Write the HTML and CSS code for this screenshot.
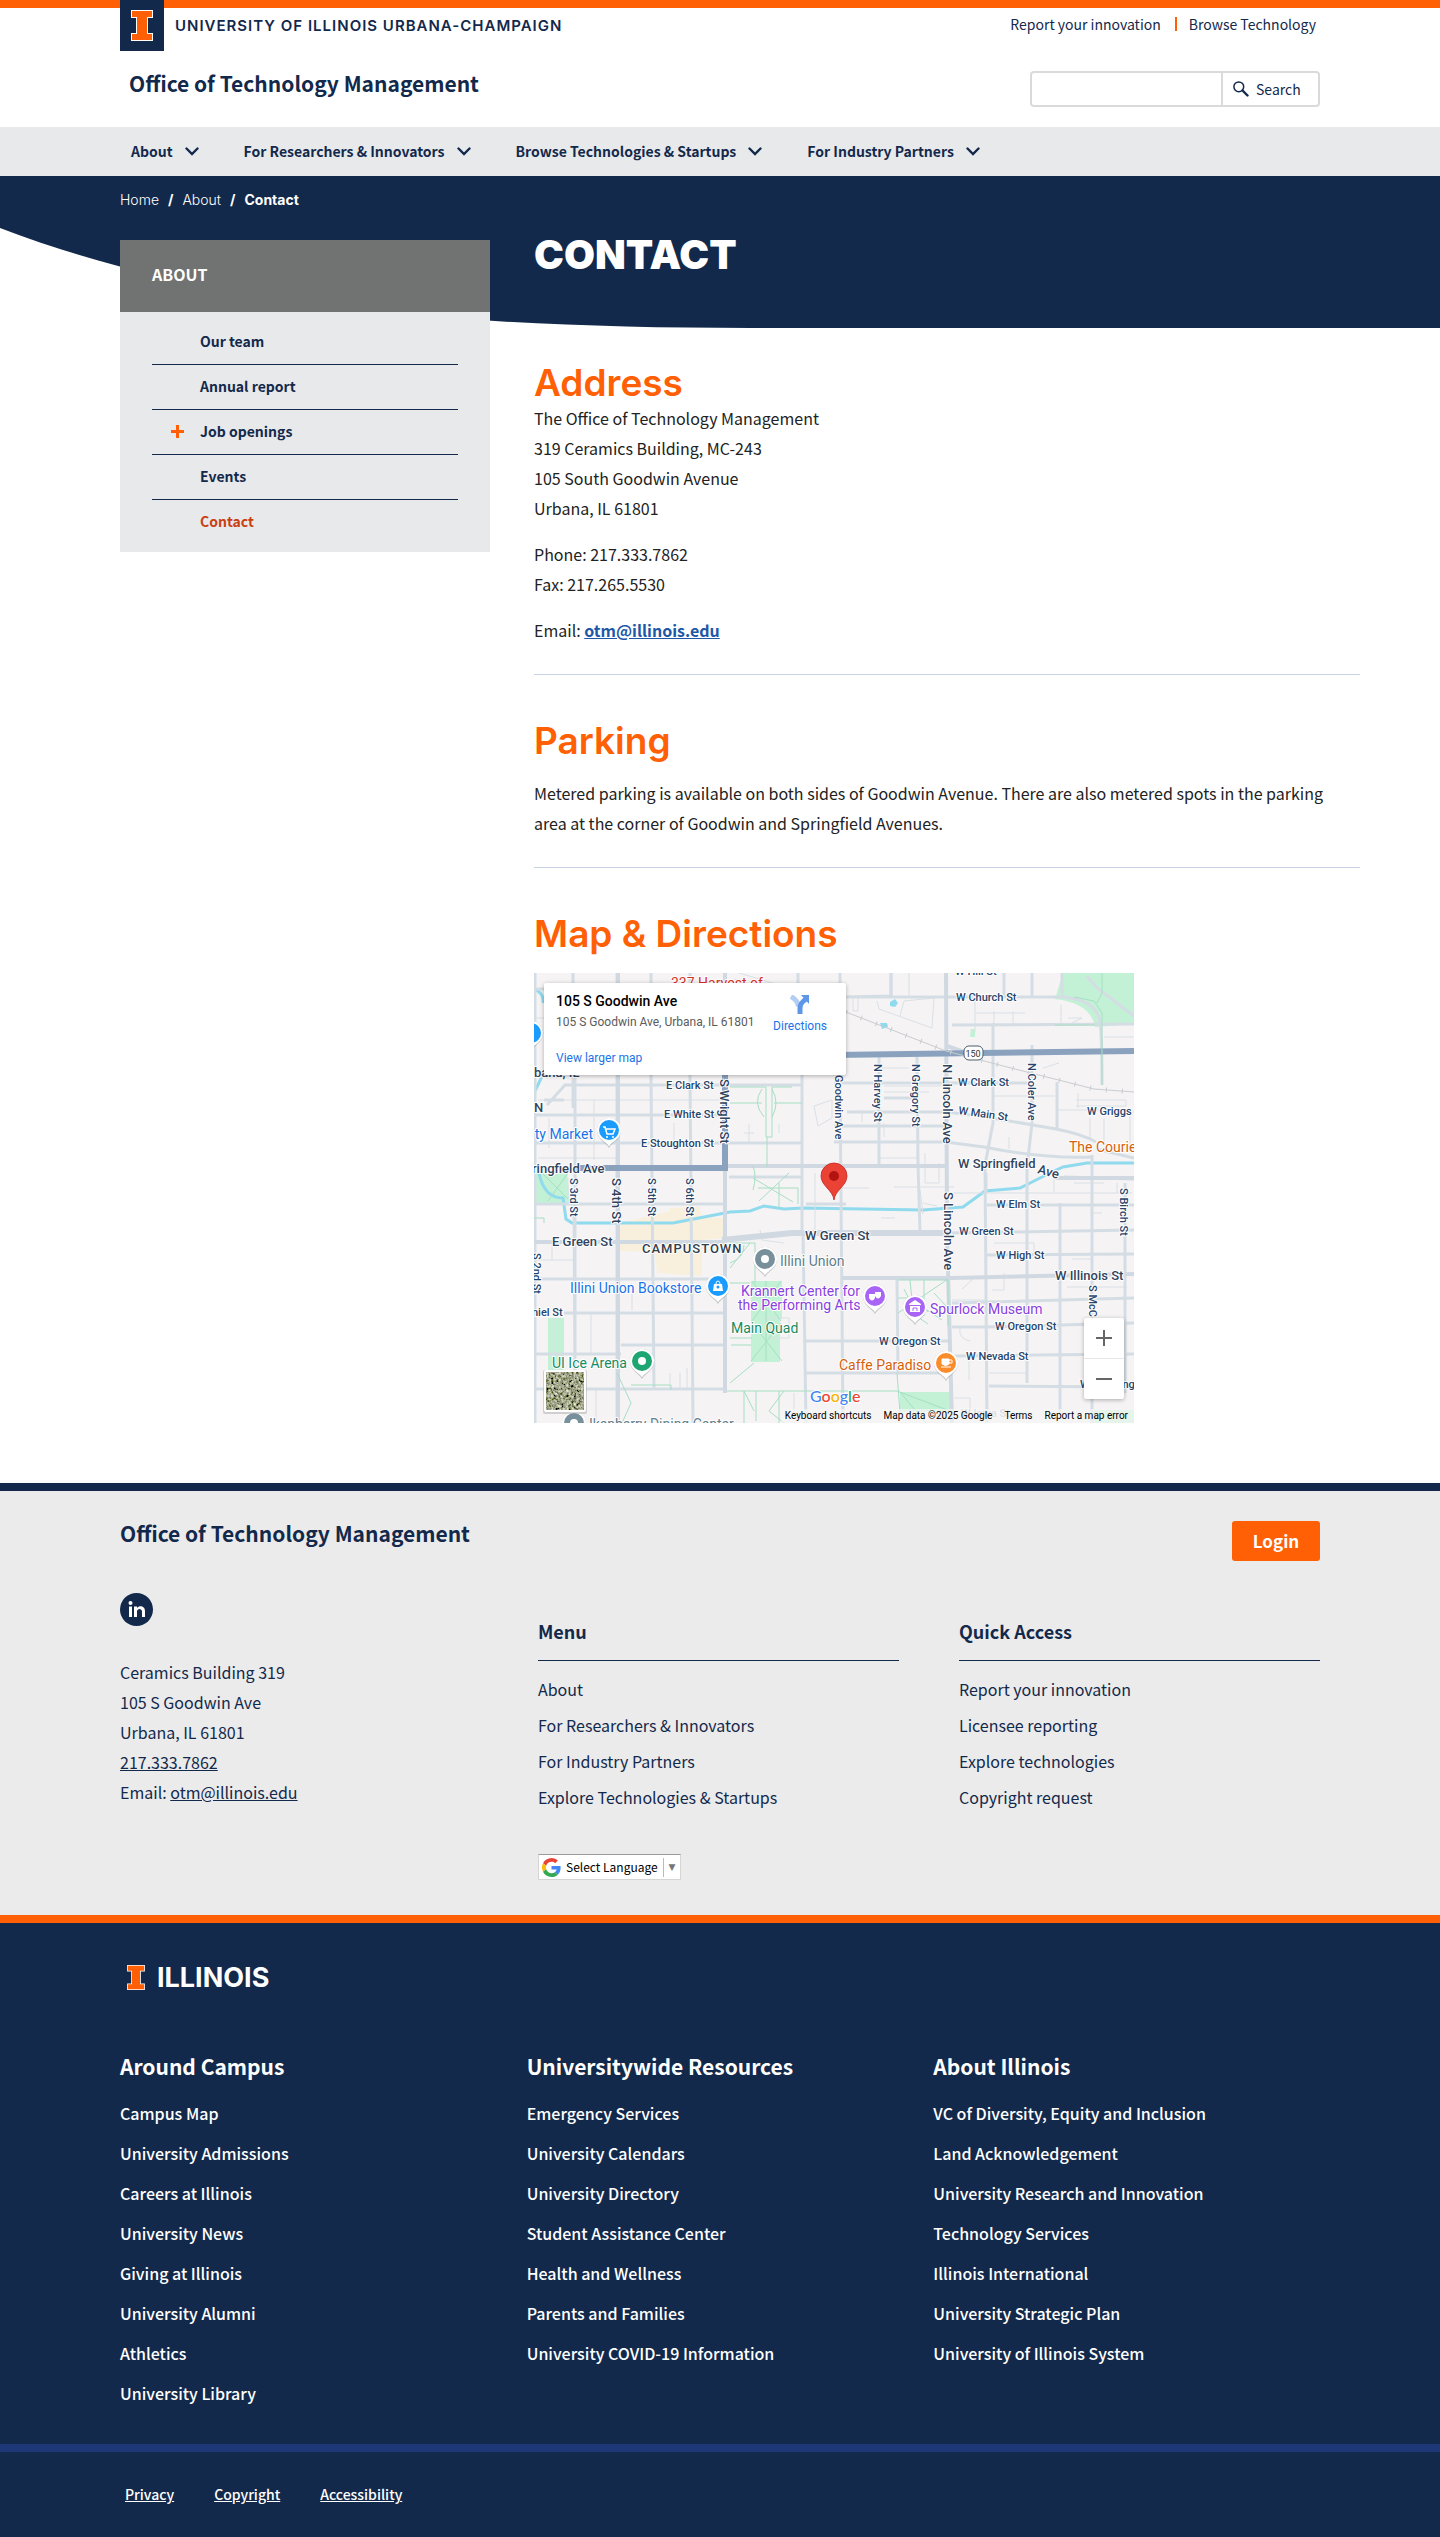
FILE: index.html
```html
<!DOCTYPE html>
<html lang="en">
<head>
<meta charset="utf-8">
<meta name="viewport" content="width=device-width, initial-scale=1">
<title>Contact | Office of Technology Management</title>
<link rel="stylesheet" href="styles.css">
</head>
<body>
<svg class="defs" width="0" height="0" aria-hidden="true">
  <symbol id="block-i" viewBox="0 0 22 31">
    <path d="M0 0h22v8h-5v15h5v8H0v-8h5V8H0z" fill="#fff"/>
    <path d="M1 1h20v6h-5v17h5v6H1v-6h5V7H1z" fill="#ff5f05"/>
  </symbol>
  <symbol id="chevron" viewBox="0 0 14 9">
    <path d="M1.500 1.500 7 7l5.500-5.500" fill="none" stroke="#13294b" stroke-width="2.400" stroke-linecap="round"/>
  </symbol>
</svg>

<header class="masthead">
  <div class="masthead-left">
    <a class="campus" href="#">
      <span class="campus-mark"><svg width="22" height="31"><use href="#block-i"/></svg></span>
      <span class="campus-name">UNIVERSITY OF ILLINOIS URBANA-CHAMPAIGN</span>
    </a>
    <a class="unit-name" href="#">Office of Technology Management</a>
  </div>
  <div class="masthead-right">
    <ul class="quick-links">
      <li><a href="#">Report your innovation</a></li>
      <li><a href="#">Browse Technology</a></li>
    </ul>
    <form class="search">
      <input type="search" aria-label="Search this site">
      <button type="submit">
        <svg width="16" height="16" viewBox="0 0 16 16" fill="none" stroke="#13294b"><circle cx="5.800" cy="5.800" r="4.900" stroke-width="1.500"/><path d="m9.500 9.500 5 5" stroke-width="2.400" stroke-linecap="round"/></svg>
        Search
      </button>
    </form>
  </div>
</header>

<nav class="main-nav" aria-label="Main">
  <a href="#">About <svg width="14" height="9"><use href="#chevron"/></svg></a>
  <a href="#">For Researchers &amp; Innovators <svg width="14" height="9"><use href="#chevron"/></svg></a>
  <a href="#">Browse Technologies &amp; Startups <svg width="14" height="9"><use href="#chevron"/></svg></a>
  <a href="#">For Industry Partners <svg width="14" height="9"><use href="#chevron"/></svg></a>
</nav>

<div class="page">
  <svg class="hero" viewBox="0 0 1440 152" preserveAspectRatio="none" aria-hidden="true"><path d="M0 0h1440v152H750C450 152 200 129 0 52z" fill="#13294b"/></svg>
  <ol class="breadcrumb">
    <li><a href="#">Home</a></li>
    <li><a href="#">About</a></li>
    <li aria-current="page">Contact</li>
  </ol>
  <div class="columns">
    <aside class="side-nav">
      <h2>ABOUT</h2>
      <ul>
        <li><a href="#">Our team</a></li>
        <li><a href="#">Annual report</a></li>
        <li class="has-children"><a href="#">Job openings</a></li>
        <li><a href="#">Events</a></li>
        <li><a class="current" href="#">Contact</a></li>
      </ul>
    </aside>
    <main>
      <h1>CONTACT</h1>
      <h2 class="tight">Address</h2>
      <p>The Office of Technology Management<br>319 Ceramics Building, MC-243<br>105 South Goodwin Avenue<br>Urbana, IL 61801</p>
      <p>Phone: 217.333.7862<br>Fax: 217.265.5530</p>
      <p>Email: <a href="#">otm@illinois.edu</a></p>
      <hr>
      <h2>Parking</h2>
      <p>Metered parking is available on both sides of Goodwin Avenue. There are also metered spots in the parking area at the corner of Goodwin and Springfield Avenues.</p>
      <hr>
      <h2>Map &amp; Directions</h2>
      <div class="map">
        <svg class="map-canvas" viewBox="0 0 600 450" role="img" aria-label="Map of 105 S Goodwin Ave">
          <defs>
            <symbol id="pin" viewBox="-14 -14 28 34">
              <path d="M0 17C-2 12-12 9-12-1a12 12 0 0 1 24 0C12 9 2 12 0 17z" fill="#8a8f94" opacity=".5"/>
              <path d="M0 15.500C-2 11-12 8-12-1a12 12 0 0 1 24 0C12 8 2 11 0 15.500z" fill="#fff"/>
              <circle cy="-1" r="10" fill="currentColor"/>
            </symbol>
            <filter id="aerial" x="0" y="0" width="100%" height="100%">
              <feTurbulence type="fractalNoise" baseFrequency=".4" numOctaves="3" seed="4"/>
              <feColorMatrix values="1.300 .5 0 0 -.55  1.300 .5 0 0 -.53  1.200 .3 0 0 -.5  0 0 0 0 1"/>
            </filter>
          </defs>
          <rect width="600" height="450" fill="#f5f3f4"/>
          <g fill="#c3f1d5">
            <path d="M529 0h71v51l-39 3q-4-24-40-28z"/>
            <path d="M0 199h33l3 32H0z"/>
            <path d="M14 345h16v52H14z"/>
            <path d="M217 308h31v38h-2v43h-29z"/>
            <path d="M366 419h50v20h-50z"/>
            <path d="M556 437h44v13h-44z"/>
            <path d="M437 56h4v8h-5z"/>
          </g>
          <path d="M86 250l50-12 0-3 30-1 1 10 24 1v20l-23 2v36l-45-3-2-21-35-1z" fill="#f8f0dc"/>
          <path d="M356 29l5-3 3 4-3 4-5-1zM346 50h7l1 4-6 2z" fill="#90daee"/>
          <g class="creek">
            <path d="M5 200Q10 225 29 225l3 21 6 4h101l57-11 20-1 14-5 20 3 19-1 120 2 40-3 22-16 35-3 26-13 17-8 24-4h47"/>
            <path d="M0 16q10 4 9 14M12 95L0 120"/>
          </g>
          <g class="lane">
            <path d="M0 45h10M0 60h10M12 60v40M4 127h186M4 185h80M60 127v60M140 150v20M15 145v30M0 287h40M18 270v17M57 340v42M20 345v95M34 205v20M98 320v17M136 400v16M146 400v16M153 395v20M62 417v33"/>
            <path d="M195 45h73M205 0l40 12M200 6l30 10M215 151v18M210 160h10M245 151v9M280 133l18-6v18l-14 8z"/>
            <path d="M319 25v13h5v-13M343 28l2 8 53 19 2-30-30 3-4 15M375 0v22M441 23v36M441 40h50M460 38v15M479 38v15M570 64h30M527 32v20M538 50l10-5-14 0M525 90l-16 5M459 123h62M542 127h50v6h-50M522 137h48l30 2M544 120v15M570 145v28M596 143v30M556 145v20M475 164v12M350 113h60M350 119h45M345 95h30M328 137v12M345 185h38M350 150v14M391 180v30h14v-20M360 214h60M418 220h180M460 270h40M500 270v16M470 300v17h-12M428 316l12-11M418 327h35M426 354q-2 12 10 14M435 385v22M420 425h16v20M455 400h38M520 205v14M540 210h30M583 210v10M533 314h60M538 286h20M556 240h12M300 215h35M386 217l3 24M347 245h14M389 230l14 3M281 200v60M250 270l-22-3-2-10M230 345h25v20h-20M260 420v25"/>
          </g>
          <g class="street">
            <path d="M1 0v450M39 0v135M41 100v300M40 217l1 199M83 0v450M117 0v100M117 102l3 314M156 102l3 348M84 0v12M156 0v15M264 0v20M268 100v160M269 260l3 190M306 0v110M306 110l3 340M345 84v108M383 84l1 108 2 66M363 306l1 94M459 50v100l-8 42 2 258M498 72v78l-5 44v216M523 109v46M526 230v210M558 182v268M591 210v210M528 0v25M498 0v23M470 0v23M357 0v23"/>
            <path d="M0 16h268M13 132l18-20h160M0 142h190M0 170h268M10 127h20M191 170h77M191 112h77M0 231h190M0 306h190M30 340h163M87 372h106M0 381h87M0 416h193M272 368h143M272 400h143M306 24l51-1v-23M313 24h215q30 2 37 20 3 8 3 68M600 51l-182 1M300 110h200M350 125h30M313 139h100l39 5 70 12q26 5 40 13M452 220v-20M300 169h112l38 5q60 12 108 10M562 176l38 9M453 232h147M412 260l188-3M453 282l147-1M418 330l182-5M418 354h35l147-4M418 383l182-2M455 413l145 1M300 153h113M530 204l70 2M195 204h73M272 231h40M191 193h222M0 100h30M553 3l10 12 37 28"/>
          </g>
          <g class="avenue">
            <path d="M412 0l1 259 5 191M84 0v450M191 0v420M0 269h190M308 305h110l182-4M191 193h222M522 205h78M413 73l20 7"/>
            <path class="wide" d="M188 267l70-7h155"/>
          </g>
          <path class="highway" d="M40 195h151v-93M300 82l300-4"/>
          <path class="rail" d="M312 39l100 39 65 17 83 21 40 3"/>
          <path class="rail-ties" d="M312 39l100 39 65 17 83 21 40 3"/>
          <g class="path">
            <path d="M196 114h32l4 0 0 50 6 0 0-50h20M228 116q-10 14 2 28M238 116q8 14 0 28M196 130h32M240 130h28M233 164v30M219 193q4 10 0 24M219 205l40 24M225 228l30-28M224 215h40v16M245 210v25M196 290q14-5 14-18M196 270h25v40M196 295l20-25M196 310h20M196 365h22M196 410l24-20M218 308l29 40M247 308l-29 40M218 350l30 38M247 350l-30 38M232 308v80M217 372h-20M193 418h170l53 20M366 419l50 60M363 400l3 40M83 400l14 30-9 20M97 412h40v5M210 450v-32l10 20M222 418v30M250 418l-15 20 15 12M245 450v-32M8 200l26 26M34 200l-20 28M10 250v-5H0"/>
            <path d="M364 307h50v46M364 340l50-34M376 307l2 20 30 20M390 307v36M364 325h20l10 14M370 316l14 28 10 7M400 320l14 15"/>
            <path d="M568 112V40l-8-12-20-4M568 0v20l-5 10M521 52h40"/>
          </g>

          <g class="poi-labels">
            <text class="blue" x="59" y="166" text-anchor="end">ty Market</text>
            <text class="blue" x="36" y="320">Illini Union Bookstore</text>
            <text class="slate" x="246" y="293">Illini Union</text>
            <text class="violet" x="207" y="323">Krannert Center for</text>
            <text class="violet" x="204" y="337">the Performing Arts</text>
            <text class="violet" x="396" y="341">Spurlock Museum</text>
            <text class="green" x="197" y="360">Main Quad</text>
            <text class="green" x="18" y="395">UI Ice Arena</text>
            <text class="orange" x="305" y="397">Caffe Paradiso</text>
            <text class="orange" x="535" y="179">The Courier Cafe</text>
            <text class="slate" x="55" y="456">Ikenberry Dining Center</text>
            <text class="red" x="137" y="15">337 Harvest of</text>
          </g>
          <g class="street-labels">
            <text x="132" y="116">E Clark St</text>
            <text x="130" y="145">E White St</text>
            <text x="107" y="174">E Stoughton St</text>
            <text x="421" y="2">W Hill St</text>
            <text x="422" y="28">W Church St</text>
            <text x="424" y="113">W Clark St</text>
            <text transform="translate(424 141) rotate(8)">W Main St</text>
            <text x="553" y="142">W Griggs</text>
            <text x="462" y="235">W Elm St</text>
            <text x="425" y="262">W Green St</text>
            <text x="462" y="286">W High St</text>
            <text x="461" y="357">W Oregon St</text>
            <text x="345" y="372">W Oregon St</text>
            <text x="432" y="387">W Nevada St</text>
            <text x="427" y="444" opacity=".45">W Iowa St</text>
            <text x="546" y="415">W Washington</text>
            <text x="-2" y="343">niel St</text>
            <text transform="translate(301 102) rotate(90)">Goodwin Ave</text>
            <text transform="translate(340 91) rotate(90)">N Harvey St</text>
            <text transform="translate(378 91) rotate(90)">N Gregory St</text>
            <text transform="translate(494 90) rotate(90)">N Coler Ave</text>
            <text transform="translate(36 205) rotate(90)">S 3rd St</text>
            <text transform="translate(114 205) rotate(90)">S 5th St</text>
            <text transform="translate(152 205) rotate(90)">S 6th St</text>
            <text transform="translate(-1 280) rotate(90)">S 2nd St</text>
            <text transform="translate(586 215) rotate(90)">S Birch St</text>
            <text transform="translate(555 312) rotate(90)">S McC</text>
          </g>
          <g class="road-labels">
            <text x="-2" y="200">ringfield Ave</text>
            <text x="0" y="104">bana, IL</text>
            <text x="0" y="139">N</text>
            <text x="18" y="273">E Green St</text>
            <text x="271" y="267">W Green St</text>
            <text x="424" y="195">W Springfield</text>
            <text transform="translate(503 200) rotate(16)">Ave</text>
            <text x="521" y="307">W Illinois St</text>
            <text transform="translate(186 106) rotate(90)">S Wright St</text>
            <text transform="translate(409 91) rotate(90)">N Lincoln Ave</text>
            <text transform="translate(410 219) rotate(90)">S Lincoln Ave</text>
            <text transform="translate(78 205) rotate(90)">S 4th St</text>
            <text class="district" x="108" y="280">CAMPUSTOWN</text>
          </g>
          <rect x="430" y="73" width="19" height="14" rx="5" fill="#fff" stroke="#4d5f6c"/>
          <text class="shield" x="439" y="84">150</text>

          <use href="#pin" x="61" y="144" width="28" height="34" color="#1a9cff"/>
          <path d="M69 154h2l2 7h6l2-5h-9" fill="none" stroke="#fff" stroke-width="1.500"/><circle cx="73" cy="164" r="1" fill="#fff"/><circle cx="79" cy="164" r="1" fill="#fff"/>
          <use href="#pin" x="-17" y="47" width="28" height="34" color="#1a9cff"/>
          <use href="#pin" x="170" y="300" width="28" height="34" color="#1a9cff"/>
          <path d="M180 311h8l1 7h-10z" fill="#fff"/><path d="M182 311a2 3 0 0 1 4 0" fill="none" stroke="#fff"/><circle cx="184" cy="314" r="1.500" fill="#1a9cff"/>
          <use href="#pin" x="217" y="273" width="28" height="34" color="#78909c"/><circle cx="231" cy="286" r="4" fill="#fff"/>
          <use href="#pin" x="94" y="375" width="28" height="34" color="#1ea672"/><circle cx="108" cy="388" r="4" fill="#fff"/>
          <use href="#pin" x="26" y="437" width="28" height="34" color="#78909c"/><circle cx="40" cy="450" r="4" fill="#fff"/>
          <use href="#pin" x="327" y="310" width="28" height="34" color="#a864f5"/>
          <path d="M335 321h6v4q-3 5-6 0zM341 319h6v4q-3 5-6 0z" fill="#fff"/>
          <use href="#pin" x="367" y="321" width="28" height="34" color="#a864f5"/>
          <path d="M375 331l6-4 6 4v1h-12zM376 333h10v6h-10z" fill="#fff"/><path d="M379 338v-3h4v3" fill="none" stroke="#a864f5"/>
          <use href="#pin" x="398" y="377" width="28" height="34" color="#fb8c2b"/>
          <path d="M408 386h7v5q-3 3-7 0zM407 394h10" fill="#fff" stroke="#fff"/><path d="M415 387h3v3h-3" fill="none" stroke="#fff"/>
          <path d="M300 227c-1-10-13-14-13-24a13 13 0 0 1 26 0c0 10-12 14-13 24z" fill="#ea4335" stroke="#c5221f" stroke-width=".8"/><circle cx="300" cy="203" r="5" fill="#b31412"/>

          <text class="google" x="276" y="429"><tspan fill="#4285f4">G</tspan><tspan fill="#ea4335">o</tspan><tspan fill="#f5b400">o</tspan><tspan fill="#4285f4">g</tspan><tspan fill="#34a853">l</tspan><tspan fill="#ea4335">e</tspan></text>
          <rect x="9" y="397" width="44" height="44" rx="2" fill="#999" opacity=".4"/>
          <rect x="10" y="397" width="42" height="42" rx="2" fill="#fff"/>
          <rect x="12" y="399" width="38" height="38" fill="#6f7560" filter="url(#aerial)"/>
        </svg>
        <div class="map-card">
          <div>
            <strong>105 S Goodwin Ave</strong>
            <span>105 S Goodwin Ave, Urbana, IL 61801</span>
            <a href="#">View larger map</a>
          </div>
          <a class="directions" href="#">
            <svg width="20" height="20" viewBox="0 0 20 20"><path d="M1 1.500q7 4 7.500 10" fill="none" stroke="#b3cdf3" stroke-width="5"/><path d="M10 19v-6q0-5 6-9" fill="none" stroke="#5e97e8" stroke-width="5"/><path d="M11 0h8v9z" fill="#5e97e8"/></svg>
            Directions
          </a>
        </div>
        <div class="map-zoom">
          <button type="button" aria-label="Zoom in"><svg width="16" height="16" viewBox="0 0 16 16"><path d="M8 0v16M0 8h16" stroke="#666" stroke-width="2"/></svg></button>
          <button type="button" aria-label="Zoom out"><svg width="16" height="16" viewBox="0 0 16 16"><path d="M0 8h16" stroke="#666" stroke-width="2"/></svg></button>
        </div>
        <div class="map-credits">
          <button type="button">Keyboard shortcuts</button>
          <span>Map data ©2025 Google</span>
          <a href="#">Terms</a>
          <a href="#">Report a map error</a>
        </div>
      </div>
    </main>
  </div>
</div>

<footer>
  <section class="unit-footer">
    <div class="unit-footer-top">
      <a class="unit-name" href="#">Office of Technology Management</a>
      <a class="login" href="#">Login</a>
    </div>
    <div class="unit-footer-grid">
      <div>
        <a class="linkedin" href="#" aria-label="LinkedIn">
          <svg width="33" height="33" viewBox="0 0 33 33"><circle cx="16.500" cy="16.500" r="16.500" fill="#13294b"/><g fill="#fff"><circle cx="10.500" cy="10" r="2"/><path d="M9 13.500h3V24H9zM14 13.500h3V15c2-3 8-2.500 8 3v6h-3v-5.500c0-3.500-5-3.500-5 0V24h-3z"/></g></svg>
        </a>
        <address>Ceramics Building 319<br>105 S Goodwin Ave<br>Urbana, IL 61801<br><a href="#">217.333.7862</a><br>Email: <a href="#">otm@illinois.edu</a></address>
      </div>
      <nav class="link-group" aria-label="Menu">
        <h3>Menu</h3>
        <ul>
          <li><a href="#">About</a></li>
          <li><a href="#">For Researchers &amp; Innovators</a></li>
          <li><a href="#">For Industry Partners</a></li>
          <li><a href="#">Explore Technologies &amp; Startups</a></li>
        </ul>
        <div class="language">
          <svg width="19" height="19" viewBox="0 0 48 48" aria-hidden="true"><path fill="#ea4335" d="M24 9.500c3.540 0 6.710 1.220 9.210 3.600l6.850-6.850C35.900 2.380 30.470 0 24 0 14.620 0 6.510 5.380 2.560 13.220l7.980 6.190C12.430 13.720 17.740 9.500 24 9.500z"/><path fill="#4285f4" d="M46.980 24.550c0-1.570-.15-3.090-.38-4.550H24v9.020h12.940c-.58 2.960-2.260 5.480-4.780 7.180l7.730 6c4.510-4.180 7.090-10.360 7.090-17.650z"/><path fill="#fbbc05" d="M10.530 28.590a14.500 14.500 0 0 1 0-9.180l-7.980-6.190a24 24 0 0 0 0 21.560z"/><path fill="#34a853" d="M24 48c6.480 0 11.930-2.130 15.890-5.810l-7.730-6c-2.150 1.450-4.920 2.300-8.160 2.300-6.260 0-11.570-4.220-13.470-9.910l-7.980 6.190C6.510 42.620 14.620 48 24 48z"/></svg>
          <select aria-label="Language"><option>Select Language</option></select>
          <span class="language-arrow" aria-hidden="true">▼</span>
        </div>
      </nav>
      <nav class="link-group" aria-label="Quick Access">
        <h3>Quick Access</h3>
        <ul>
          <li><a href="#">Report your innovation</a></li>
          <li><a href="#">Licensee reporting</a></li>
          <li><a href="#">Explore technologies</a></li>
          <li><a href="#">Copyright request</a></li>
        </ul>
      </nav>
    </div>
  </section>
  <section class="campus-footer">
    <a class="wordmark" href="#"><svg width="18" height="25"><use href="#block-i"/></svg><span>ILLINOIS</span></a>
    <div class="campus-grid">
      <nav aria-label="Around Campus">
        <h3>Around Campus</h3>
        <ul>
          <li><a href="#">Campus Map</a></li>
          <li><a href="#">University Admissions</a></li>
          <li><a href="#">Careers at Illinois</a></li>
          <li><a href="#">University News</a></li>
          <li><a href="#">Giving at Illinois</a></li>
          <li><a href="#">University Alumni</a></li>
          <li><a href="#">Athletics</a></li>
          <li><a href="#">University Library</a></li>
        </ul>
      </nav>
      <nav aria-label="Universitywide Resources">
        <h3>Universitywide Resources</h3>
        <ul>
          <li><a href="#">Emergency Services</a></li>
          <li><a href="#">University Calendars</a></li>
          <li><a href="#">University Directory</a></li>
          <li><a href="#">Student Assistance Center</a></li>
          <li><a href="#">Health and Wellness</a></li>
          <li><a href="#">Parents and Families</a></li>
          <li><a href="#">University COVID-19 Information</a></li>
        </ul>
      </nav>
      <nav aria-label="About Illinois">
        <h3>About Illinois</h3>
        <ul>
          <li><a href="#">VC of Diversity, Equity and Inclusion</a></li>
          <li><a href="#">Land Acknowledgement</a></li>
          <li><a href="#">University Research and Innovation</a></li>
          <li><a href="#">Technology Services</a></li>
          <li><a href="#">Illinois International</a></li>
          <li><a href="#">University Strategic Plan</a></li>
          <li><a href="#">University of Illinois System</a></li>
        </ul>
      </nav>
    </div>
  </section>
  <section class="legal">
    <a href="#">Privacy</a>
    <a href="#">Copyright</a>
    <a href="#">Accessibility</a>
  </section>
</footer>
</body>
</html>
```
FILE: styles.css
```css
:root {
  --navy: #13294b;
  --orange: #ff5f05;
  --gutter: 120px;
  --body-font: "Noto Sans CJK SC", "Noto Sans", sans-serif;
  --head-font: Inter, "Open Sans", sans-serif;
}

* { box-sizing: border-box; }

body {
  margin: 0;
  background: #fff;
  color: #222;
  font-family: var(--body-font);
  font-size: 16px;
  line-height: 30px;
}

h1, h2, h3, p, ul, ol { margin: 0; padding: 0; }
ul, ol { list-style: none; }
a { color: inherit; text-decoration: none; }
svg { display: block; flex: none; }
.defs { position: absolute; }
button, input, select { font: inherit; color: inherit; margin: 0; padding: 0; border: 0; background: none; }

/* Header */
.masthead {
  display: flex;
  justify-content: space-between;
  padding: 0 var(--gutter) 20px;
  background: linear-gradient(var(--orange) 8px, #fff 8px);
  color: var(--navy);
}
.campus { display: flex; align-items: center; gap: 11px; }
.campus-mark {
  display: grid;
  place-items: center;
  width: 44px;
  height: 51px;
  background: var(--navy);
}
.campus-name {
  font-family: var(--head-font);
  font-size: 15px;
  font-weight: 600;
  letter-spacing: 1px;
}
.unit-name {
  display: block;
  color: var(--navy);
  font-size: 21px;
  font-weight: 700;
}
.masthead .unit-name { margin: 14px 0 0 9px; line-height: 36px; }
.masthead-right { display: flex; flex-direction: column; align-items: flex-end; gap: 35px; padding-top: 12px; }
.quick-links { display: flex; align-items: center; font-size: 14px; line-height: 24px; padding-right: 4px; }
.quick-links li { display: flex; align-items: center; }
.quick-links li + li::before { content: ""; width: 2px; height: 14px; margin: 0 12px 0 14px; background: var(--orange); }
.search {
  display: flex;
  width: 290px;
  height: 36px;
  border: 2px solid #d9dadb;
  border-radius: 4px;
}
.search input { flex: 1; min-width: 0; padding: 0 10px; outline: 0; }
.search button {
  display: flex;
  align-items: center;
  gap: 7px;
  width: 97px;
  padding-left: 10px;
  border-left: 2px solid #d9dadb;
  font-size: 14px;
  line-height: 20px;
}

.main-nav {
  display: flex;
  gap: 45px;
  height: 49px;
  padding: 0 131px;
  background: #e8e9eb;
  color: var(--navy);
  font-size: 14px;
  font-weight: 700;
  line-height: 49px;
}
.main-nav a { display: flex; align-items: center; gap: 12px; }

/* Page */
.page { position: relative; padding: 0 80px 60px var(--gutter); }
.hero { position: absolute; inset: 0 0 auto 0; width: 100%; height: 152px; z-index: -1; }
.breadcrumb {
  display: flex;
  height: 64px;
  padding-top: 14px;
  color: #fff;
  font: 300 14px/20px var(--head-font);
}
.breadcrumb li + li::before { content: "/"; margin: 0 9px; font-weight: 700; }
.breadcrumb [aria-current] { font-weight: 700; }
.columns { display: grid; grid-template-columns: 370px minmax(0, 1fr); gap: 44px; align-items: start; }

.side-nav { background: #e8e9eb; color: var(--navy); }
.side-nav h2 {
  padding: 0 32px 4px;
  background: #707372;
  color: #fff;
  font-size: 16px;
  font-weight: 700;
  line-height: 68px;
}
.side-nav ul { padding: 8px 32px 7px; }
.side-nav li {
  position: relative;
  padding: 0 0 2px 48px;
  border-bottom: 1px solid var(--navy);
  font-size: 14px;
  font-weight: 600;
  line-height: 42px;
}
.side-nav li:last-child { border-bottom-color: transparent; }
.side-nav .has-children::before {
  content: "";
  position: absolute;
  left: 19px;
  top: 15px;
  width: 13px;
  height: 13px;
  background:
    linear-gradient(var(--orange), var(--orange)) center / 13px 3px no-repeat,
    linear-gradient(var(--orange), var(--orange)) center / 3px 13px no-repeat;
}
.side-nav .current { color: #c84113; }

main h1 {
  margin-bottom: 93px;
  color: #fff;
  font: 900 40px/30px var(--head-font);
}
main h2 {
  margin-bottom: 17px;
  color: var(--orange);
  font: 600 37px/40px var(--head-font);
}
main h2.tight { margin-bottom: 0; }
main p { padding-right: 20px; }
main p + p { margin-top: 16px; }
main p a { color: #1d58a7; font-weight: 700; text-decoration: underline; }
main hr { height: 1px; margin: 29px 0 46px; border: 0; background: #c8d3e6; }

/* Map */
.map {
  position: relative;
  max-width: 600px;
  margin-top: 19px;
  overflow: hidden;
  font-family: Roboto, sans-serif;
}
.map-canvas { width: 100%; height: auto; }
.creek path { fill: none; stroke: #90daee; stroke-width: 3px; }
.lane path { fill: none; stroke: #d9e0e6; stroke-width: 1px; }
.street path { fill: none; stroke: #d5dde4; stroke-width: 3px; }
.avenue path { fill: none; stroke: #d0d9e1; stroke-width: 4px; }
.avenue .wide { stroke-width: 6px; }
.highway { fill: none; stroke: #8ba2bf; stroke-width: 6px; }
.rail { fill: none; stroke: #c9ccd0; stroke-width: 1px; }
.rail-ties { fill: none; stroke: #c9ccd0; stroke-width: 5px; stroke-dasharray: 1 15; }
.path path { fill: none; stroke: #a6dfc4; stroke-width: 1px; }
.map text { paint-order: stroke; stroke: #fff; stroke-width: 2px; stroke-linejoin: round; }
.street-labels { font-size: 11px; font-weight: 500; fill: #28446b; }
.road-labels { font-size: 13px; font-weight: 500; fill: #31445c; }
.district { fill: #31404d; letter-spacing: 1px; }
.poi-labels { font-size: 14px; }
.blue { fill: #1a73e8; }
.slate { fill: #607d8b; }
.violet { fill: #8a3fe0; }
.green { fill: #188a62; }
.orange { fill: #d5610a; }
.red { fill: #d93025; }
.shield { font-size: 9px; fill: #333; text-anchor: middle; }
.google { font: 500 16px Lato, sans-serif; }

.map-card {
  position: absolute;
  top: 10px;
  left: 10px;
  display: flex;
  justify-content: space-between;
  width: 302px;
  height: 92px;
  padding: 10px 19px 0 12px;
  border-radius: 2px;
  background: #fff;
  box-shadow: 0 1px 4px rgba(0, 0, 0, .3);
  font-size: 12px;
  line-height: 16px;
}
.map-card div { display: flex; flex-direction: column; }
.map-card strong { color: #000; font-size: 14px; font-weight: 500; }
.map-card span { margin-top: 5px; color: #5b5b5b; }
.map-card a { color: #1a73e8; }
.map-card div a { margin-top: 20px; }
.map-card .directions { display: flex; flex-direction: column; align-items: center; gap: 3px; padding-top: 2px; }

.map-zoom {
  position: absolute;
  right: 10px;
  bottom: 24px;
  width: 40px;
  background: #fff;
  border-radius: 2px;
  box-shadow: 0 1px 4px rgba(0, 0, 0, .3);
}
.map-zoom button { display: grid; place-items: center; width: 40px; height: 40px; }
.map-zoom button + button { border-top: 1px solid #e6e6e6; height: 41px; }

.map-credits {
  position: absolute;
  right: 0;
  bottom: 0;
  display: flex;
  gap: 12px;
  padding: 0 6px 0 4px;
  background: rgba(245, 245, 245, .7);
  color: #000;
  font-size: 10px;
  line-height: 14px;
}

/* Unit footer */
.unit-footer {
  padding: 30px var(--gutter) 35px;
  border-top: 8px solid var(--navy);
  background: #ebebeb;
  color: var(--navy);
}
.unit-footer-top { display: flex; justify-content: space-between; align-items: flex-start; }
.unit-footer .unit-name { line-height: 24px; }
.login {
  width: 88px;
  border-radius: 3px;
  background: var(--orange);
  color: #fff;
  font-size: 17px;
  font-weight: 700;
  line-height: 40px;
  text-align: center;
}
.unit-footer-grid { display: grid; grid-template-columns: 358px 1fr 1fr; gap: 60px; margin-top: 32px; }
.linkedin { display: block; width: 33px; margin-bottom: 31px; }
address { font-style: normal; }
address a { text-decoration: underline; }
.link-group { padding-top: 24px; }
.link-group h3 {
  margin-bottom: 10px;
  padding-bottom: 15px;
  border-bottom: 1px solid var(--navy);
  font-size: 18px;
  font-weight: 700;
  line-height: 28px;
}
.link-group li { line-height: 36px; }
.language {
  display: flex;
  align-items: center;
  width: 143px;
  height: 26px;
  margin-top: 39px;
  padding-left: 3px;
  border: 1px solid #d5d5d5;
  border-top-color: #9b9b9b;
  background: #fff;
}
.language select { flex: 1; min-width: 0; margin-left: 5px; appearance: none; color: #000; font-size: 12px; line-height: 20px; }
.language-arrow {
  width: 17px;
  border-left: 1px solid #bbb;
  color: #767676;
  font: 9px/19px "DejaVu Sans", sans-serif;
  text-align: center;
}

/* Campus footer */
.campus-footer {
  padding: 42px var(--gutter) 31px;
  border-top: 8px solid var(--orange);
  background: var(--navy);
  color: #fff;
  font-weight: 500;
}
.wordmark {
  display: flex;
  align-items: center;
  gap: 12px;
  width: fit-content;
  padding-left: 7px;
  font: 700 27px/25px var(--head-font);
}
.campus-grid { display: grid; grid-template-columns: repeat(3, 1fr); gap: 20px; margin-top: 62px; }
.campus-grid h3 { margin-bottom: 13px; font-size: 21px; font-weight: 700; line-height: 28px; }
.campus-grid li { line-height: 40px; }

.legal {
  display: flex;
  gap: 40px;
  padding: 30px 125px 32px;
  border-top: 8px solid #1e3877;
  background: var(--navy);
  color: #fff;
  font-size: 14px;
  font-weight: 500;
  line-height: 24px;
}
.legal a { text-decoration: underline; }
```
